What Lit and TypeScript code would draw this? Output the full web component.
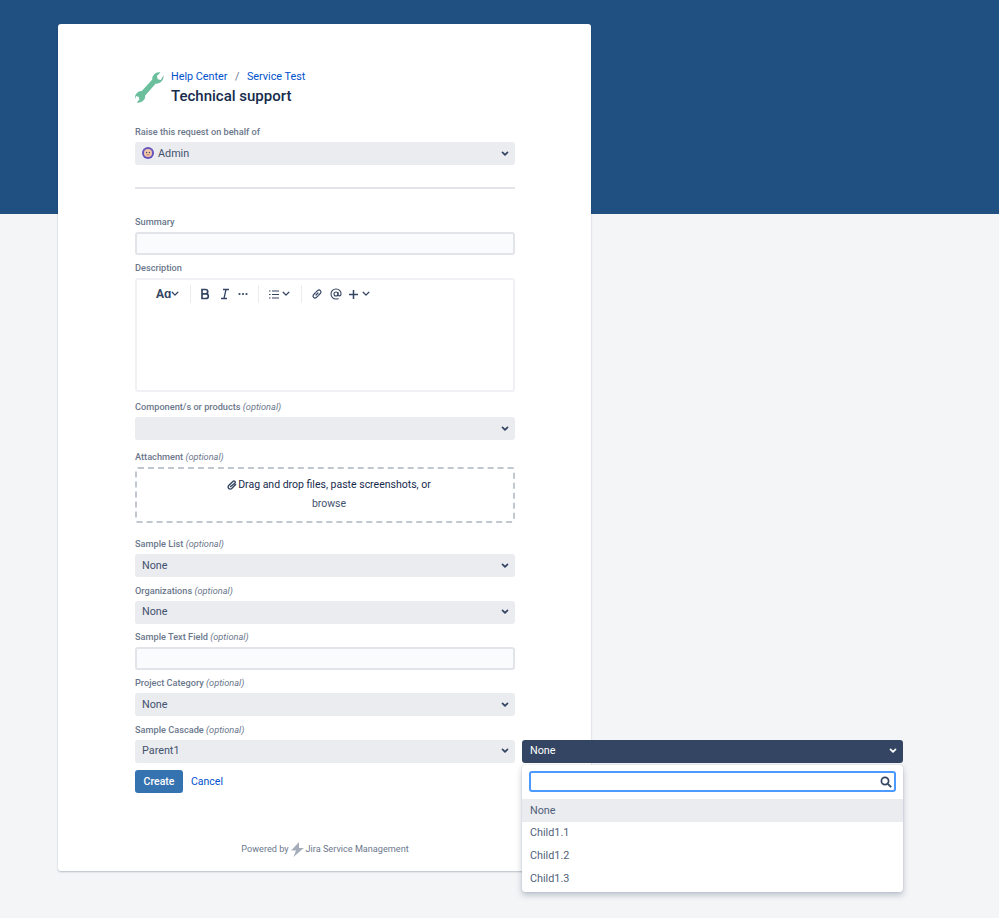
import { LitElement, html, css } from "lit";
import { customElement } from "lit/decorators.js";

const chevron = (color = "#344563") => html`<svg class="chev" width="10" height="8" viewBox="0 0 10 8"><path d="M2.500 2.400 5 4.900l2.500-2.500" fill="none" stroke=${color} stroke-width="1.700" stroke-linecap="round" stroke-linejoin="round"/></svg>`;
const tiny = (cls = "") => html`<svg class=${cls} width="8" height="6" viewBox="0 0 8 6"><path d="M1.200 1.300 4 4.100l2.800-2.800" fill="none" stroke="#344563" stroke-width="1.300" stroke-linecap="round" stroke-linejoin="round"/></svg>`;

@customElement("app-root")
export class AppRoot extends LitElement {
  static styles = css`
    :host { display: block; min-height: 918px; background: linear-gradient(#205081 214px, #f4f5f7 214px); font-family: Roboto, "Liberation Sans", sans-serif; color: #344563; overflow: hidden; }
    * { box-sizing: border-box; }
    .page { padding: 24px 0 0 58px; }
    .card { width: 533px; height: 847px; background: #fff; border-radius: 3px; box-shadow: 0 1px 2px rgba(9,30,66,.25); padding: 42px 76px 0 77px; display: flex; flex-direction: column; position: relative; }
    .head { display: flex; gap: 7px; height: 57px; flex: none; }
    .wrench { margin-top: 6px; flex: none; }
    .crumbs { font-size: 10.8px; line-height: 20px; padding-top: 1px; color: #0052cc; display: flex; gap: 7.500px; }
    .crumbs i { font-style: normal; color: #6b778c; }
    h1 { margin: -1px 0 0; font-size: 15px; font-weight: 500; line-height: 20px; color: #172b4d; }
    .label { display: block; font-size: 9.200px; font-weight: 500; line-height: 17px; height: 16px; margin-bottom: 3px; color: #6b778c; white-space: nowrap; }
    .label em { font-weight: 400; }
    .select { height: 23px; flex: none; background: #ebecf0; border-radius: 3px; padding: 0 7px 1px; display: flex; align-items: center; justify-content: space-between; font-size: 10.800px; color: #42526e; }
    .select.up { padding-bottom: 3px; }
    .chev { flex: none; margin: 1px -2px 0 auto; }
    .who { display: flex; align-items: center; gap: 4px; }
    hr { border: 0; height: 2px; background: #e3e5ea; margin: 22px 0 24px; flex: none; width: 100%; }
    .input { height: 23px; background: #fafbfc; border: 2px solid #e2e4e9; border-radius: 3px; flex: none; }
    .editor { height: 114px; border: 2px solid #f0f1f4; border-radius: 3px; flex: none; padding: 5px 0 0 19px; display: flex; align-items: flex-start; }
    .tools { display: flex; align-items: center; height: 18px; color: #344563; }
    .aa { font-size: 12px; font-weight: 700; width: 15px; }
    .sep { width: 1px; height: 18px; background: #ebecf0; flex: none; }
    .m3 { margin-left: 3px; } .m4 { margin-left: 4px; } .m7 { margin-left: 7px; } .m8 { margin-left: 8px; } .m9 { margin-left: 9px; } .m10 { margin-left: 10px; } .m11 { margin-left: 11px; }
    .drop { height: 56px; border: 2px dashed #c1c7d0; border-radius: 3px; flex: none; display: flex; flex-direction: column; align-items: center; font-size: 10.500px; padding: 7px 0 0 8px; line-height: 18px; color: #172b4d; }
    .drop span { display: flex; align-items: center; gap: 1px; }
    .drop .browse { color: #42526e; margin-top: 1px; }
    .g4 { margin-top: 4px; } .g5 { margin-top: 5px; } .g6 { margin-top: 6px; } .g8 { margin-top: 8px; } .g12 { margin-top: 12px; }
    .actions { display: flex; align-items: center; gap: 8px; margin-top: 7px; font-size: 10.500px; flex: none; }
    .btn { width: 48px; height: 23px; border-radius: 3px; background: #3572b0; color: #fff; border: 0; font: 500 10.500px Roboto, sans-serif; padding: 0; }
    .actions a { color: #0052cc; }
    .foot { margin-top: 48px; display: flex; justify-content: center; align-items: center; gap: 2px; font-size: 9.150px; color: #6b778c; line-height: 16px; flex: none; }
    .cascade { position: relative; }
    .menu { position: absolute; left: 387px; top: 0; width: 381px; }
    .menu .select { background: #344563; color: #fff; padding-left: 8px; }
    .list { margin-top: 2px; background: #fff; border-radius: 3px; box-shadow: 0 3px 6px rgba(9,30,66,.25), 0 0 1px rgba(9,30,66,.3); padding-top: 6px; height: 127px; }
    .search { margin: 0 7px 7px 7px; height: 21px; border: 2px solid #4c9aff; border-radius: 3px; display: flex; align-items: center; justify-content: flex-end; padding-right: 2px; background: #fff; }
    .opt { height: 23px; line-height: 22px; padding-left: 8px; font-size: 10.800px; color: #505f79; }
    .opt.on { background: #ebecf0; line-height: 23px; }
  `;

  private sel(label: string, value: string, cls = "g5", selCls = "select") {
    return html`<div class=${cls}><div class="label">${label} <em>(optional)</em></div><div class=${selCls}><span>${value}</span>${chevron()}</div></div>`;
  }

  render() {
    return html`<div class="page"><main class="card">
      <div class="head">
        <svg class="wrench" width="29" height="31" viewBox="0 0 29 31"><path d="M28.600 3.600c.3 3.300-1.700 6.600-4.900 7.600-1 .4-1.800.5-2.900.4L10 23.800c.3 1.300.1 2.600-.9 3.800-1.500 2.500-4.500 3.600-7.300 2.800l2.600-3-.6-2.500L1 24l-.9 3.100c-.6-2.500.3-5 2.400-6.700 1.300-1 2.800-1.500 4.300-1.400L17.300 7.400c-.3-1.800.3-3.500 1.800-5C20.700.7 23 0 25.400.5L21.900 4l.8 3.200 3 .8z" fill="#6bbf9c"/></svg>
        <div><div class="crumbs"><span>Help Center</span><i>/</i><span>Service Test</span></div><h1>Technical support</h1></div>
      </div>
      <div><div class="label">Raise this request on behalf of</div>
        <div class="select"><span class="who"><svg width="12" height="12" viewBox="0 0 12 12"><circle cx="6" cy="6" r="6" fill="#6554c0"/><circle cx="6" cy="6" r="4" fill="#f4c7a8"/><circle cx="4.600" cy="5.500" r=".7" fill="#42526e"/><circle cx="7.400" cy="5.500" r=".7" fill="#42526e"/><path d="M4.500 7.800h3" stroke="#ae6d4a" stroke-width=".8"/></svg>Admin</span>${chevron()}</div></div>
      <hr />
      <div><div class="label">Summary</div><div class="input"></div></div>
      <div class="g4"><div class="label">Description</div>
        <div class="editor"><div class="tools">
          <span class="aa">Aɑ</span>${tiny()}
          <span class="sep m11"></span>
          <svg class="m8" width="12" height="12" viewBox="0 0 12 12"><path d="M3 1.500h3.500a2.200 2.200 0 0 1 0 4.400H3zm0 4.400h4a2.300 2.300 0 0 1 0 4.600H3z" fill="none" stroke="#344563" stroke-width="1.700"/></svg>
          <svg class="m9" width="10" height="12" viewBox="0 0 10 12"><path d="M3 1.500h6M1 10.500h6M6 1.500 4 10.500" fill="none" stroke="#344563" stroke-width="1.300"/></svg>
          <svg class="m8" width="10" height="4" viewBox="0 0 10 4"><circle cx="1.500" cy="2" r="1.100" fill="#344563"/><circle cx="5" cy="2" r="1.100" fill="#344563"/><circle cx="8.500" cy="2" r="1.100" fill="#344563"/></svg>
          <span class="sep m10"></span>
          <svg class="m10" width="10" height="9" viewBox="0 0 10 9"><path d="M3 1h7M3 4.500h7M3 8h7M0 1h1.500M0 4.500h1.500M0 8h1.500" stroke="#344563" stroke-width="1.100"/></svg>
          ${tiny("m3")}
          <span class="sep m11"></span>
          <svg class="m9" width="12" height="12" viewBox="0 0 12 12"><path d="M5 7l2-2M4.200 5 2.400 6.800a2 2 0 0 0 2.800 2.800L7 7.800M5 4.200l1.800-1.800a2 2 0 0 1 2.800 2.800L7.800 7" fill="none" stroke="#344563" stroke-width="1.200" stroke-linecap="round"/></svg>
          <svg class="m7" width="12" height="12" viewBox="0 0 12 12"><circle cx="6" cy="6" r="2" fill="none" stroke="#344563" stroke-width="1.100"/><path d="M8 4v2.800c0 1.500 2.700 1.500 3-.5.400-3-1.800-5.300-5-5.300a5 5 0 0 0 0 10c1 0 1.800-.2 2.500-.6" fill="none" stroke="#344563" stroke-width="1.100"/></svg>
          <svg class="m7" width="9" height="9" viewBox="0 0 10 10"><path d="M5 0v10M0 5h10" stroke="#344563" stroke-width="1.700"/></svg>
          ${tiny("m4")}
        </div></div></div>
      <div class="g6"><div class="label">Component/s or products <em>(optional)</em></div><div class="select">${chevron()}</div></div>
      <div class="g8"><div class="label">Attachment <em>(optional)</em></div>
        <div class="drop"><span><svg width="10" height="10" viewBox="0 0 10 10"><path d="M8.600 4.600 4.700 8.500a2 2 0 0 1-3-2.900l4.200-4.200a1.300 1.300 0 0 1 1.900 1.800L3.600 6.500" fill="none" stroke="#344563" stroke-width="1.400" stroke-linecap="round"/></svg>Drag and drop files, paste screenshots, or</span><span class="browse">browse</span></div></div>
      ${this.sel("Sample List", "None", "g12")}
      ${this.sel("Organizations", "None", "g5", "select up")}
      <div class="g4"><div class="label">Sample Text Field <em>(optional)</em></div><div class="input"></div></div>
      <div class="g4"><div class="label">Project Category <em>(optional)</em></div><div class="select">None${chevron()}</div></div>
      <div class="g5 cascade"><div class="label">Sample Cascade <em>(optional)</em></div>
        <div class="cascade"><div class="select up">Parent1${chevron()}</div>
          <div class="menu"><div class="select up">None${chevron("#fff")}</div>
            <div class="list"><div class="search"><svg width="12" height="12" viewBox="0 0 12 12"><circle cx="5" cy="5" r="3.600" fill="none" stroke="#344563" stroke-width="1.700"/><path d="m7.800 7.800 3.400 3.400" stroke="#344563" stroke-width="1.900"/></svg></div>
              <div class="opt on">None</div><div class="opt">Child1.1</div><div class="opt">Child1.2</div><div class="opt">Child1.3</div></div>
          </div></div></div>
      <div class="actions"><button class="btn">Create</button><a>Cancel</a></div>
      <div class="foot">Powered by <svg width="13" height="15" viewBox="0 0 13 15"><path d="M8 0 2 6.500 0 8.500h5L2.500 15 11 7.500l2-1.500H8z" fill="#a5adba"/></svg> Jira Service Management</div>
    </main></div>`;
  }
}
